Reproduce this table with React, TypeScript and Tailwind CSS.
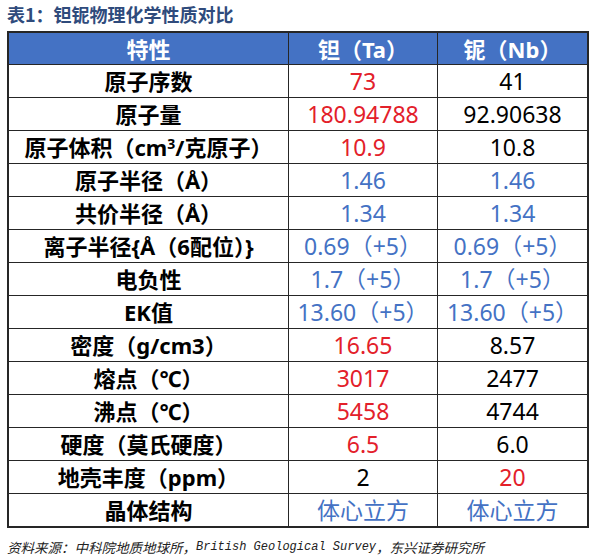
const rows: { label: React.ReactNode; ta: string; nb: string; taColor: string; nbColor: string }[] = [
  { label: "原子序数", ta: "73", nb: "41", taColor: "text-[#e3202a]", nbColor: "text-black" },
  { label: "原子量", ta: "180.94788", nb: "92.90638", taColor: "text-[#e3202a]", nbColor: "text-black" },
  {
    label: (
      <>
        原子体积（cm<sup className="text-[14px] relative -top-[3px]">3</sup>/克原子）
      </>
    ),
    ta: "10.9",
    nb: "10.8",
    taColor: "text-[#e3202a]",
    nbColor: "text-black",
  },
  { label: "原子半径（Å）", ta: "1.46", nb: "1.46", taColor: "text-[#4472c4]", nbColor: "text-[#4472c4]" },
  { label: "共价半径（Å）", ta: "1.34", nb: "1.34", taColor: "text-[#4472c4]", nbColor: "text-[#4472c4]" },
  { label: "离子半径{Å（6配位）}", ta: "0.69（+5）", nb: "0.69（+5）", taColor: "text-[#4472c4]", nbColor: "text-[#4472c4]" },
  { label: "电负性", ta: "1.7（+5）", nb: "1.7（+5）", taColor: "text-[#4472c4]", nbColor: "text-[#4472c4]" },
  { label: "EK值", ta: "13.60（+5）", nb: "13.60（+5）", taColor: "text-[#4472c4]", nbColor: "text-[#4472c4]" },
  { label: "密度（g/cm3）", ta: "16.65", nb: "8.57", taColor: "text-[#e3202a]", nbColor: "text-black" },
  { label: "熔点（℃）", ta: "3017", nb: "2477", taColor: "text-[#e3202a]", nbColor: "text-black" },
  { label: "沸点（℃）", ta: "5458", nb: "4744", taColor: "text-[#e3202a]", nbColor: "text-black" },
  { label: "硬度（莫氏硬度）", ta: "6.5", nb: "6.0", taColor: "text-[#e3202a]", nbColor: "text-black" },
  { label: "地壳丰度（ppm）", ta: "2", nb: "20", taColor: "text-black", nbColor: "text-[#e3202a]" },
  { label: "晶体结构", ta: "体心立方", nb: "体心立方", taColor: "text-[#4472c4]", nbColor: "text-[#4472c4]" },
];

const font = "font-['Noto_Sans','Noto_Sans_CJK_SC',sans-serif]";

export default function App() {
  return (
    <div className={`w-[597px] h-[558px] bg-white ${font}`}>
      <div className="h-[31px] pl-[7px] pt-[4px] text-[18px] leading-[20px] font-bold text-[#2f4b7c] font-['Noto_Sans_CJK_SC',sans-serif]">
        表1：钽铌物理化学性质对比
      </div>

      <div className="ml-[7px] w-[582px] border-2 border-[#262626] grid grid-cols-[280px_149px_149px] text-[22px] leading-none">
        {["特性", "钽（Ta）", "铌（Nb）"].map((h, i) => (
          <div
            key={h}
            className={`h-[32px] flex items-center justify-center bg-[#4472c4] text-white font-bold border-b border-[#262626] ${
              i < 2 ? "border-r" : ""
            }`}
          >
            {h}
          </div>
        ))}

        {rows.map((r, idx) => {
          const last = idx === rows.length - 1;
          const b = last ? "h-[32px]" : "h-[33px] border-b";
          return (
            <div key={idx} className="contents">
              <div className={`flex items-center justify-center font-bold text-black border-r border-[#262626] ${b}`}>
                {r.label}
              </div>
              <div className={`flex items-center justify-center text-[23px] border-r border-[#262626] ${b} ${r.taColor}`}>
                {r.ta}
              </div>
              <div className={`flex items-center justify-center text-[23px] border-[#262626] ${b} ${r.nbColor}`}>
                {r.nb}
              </div>
            </div>
          );
        })}
      </div>

      <div className="mt-[9px] pl-[7px] h-[20px] flex items-center italic text-[13.5px] text-[#222] font-['Noto_Sans_CJK_SC',sans-serif] whitespace-nowrap">
        资料来源：中科院地质地球所，
        <span className="font-['Liberation_Mono',monospace] text-[12px]">British Geological Survey</span>
        ，东兴证券研究所
      </div>
    </div>
  );
}
